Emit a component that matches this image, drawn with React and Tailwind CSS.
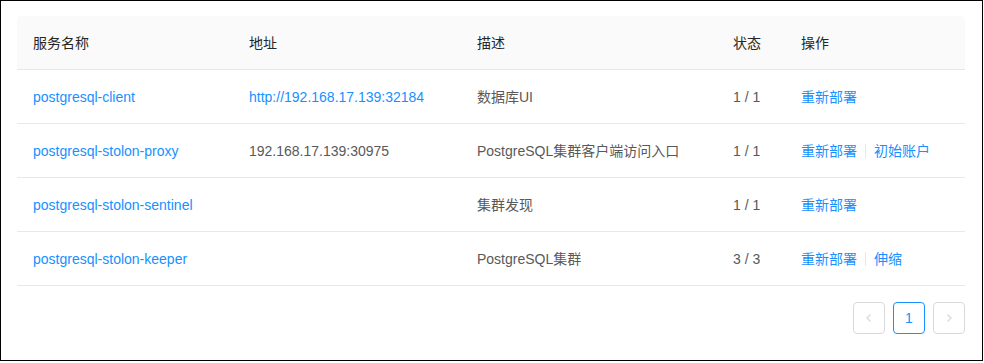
import React from "react";

const rows = [
  {
    name: "postgresql-client",
    addr: "http://192.168.17.139:32184",
    addrLink: true,
    desc: "数据库UI",
    status: "1 / 1",
    actions: ["重新部署"],
  },
  {
    name: "postgresql-stolon-proxy",
    addr: "192.168.17.139:30975",
    desc: "PostgreSQL集群客户端访问入口",
    status: "1 / 1",
    actions: ["重新部署", "初始账户"],
  },
  {
    name: "postgresql-stolon-sentinel",
    addr: "",
    desc: "集群发现",
    status: "1 / 1",
    actions: ["重新部署"],
  },
  {
    name: "postgresql-stolon-keeper",
    addr: "",
    desc: "PostgreSQL集群",
    status: "3 / 3",
    actions: ["重新部署", "伸缩"],
  },
];

const cols = "grid grid-cols-[216px_228px_256px_68px_1fr]";

const App = () => {
  return (
    <div
      className="w-[983px] h-[361px] border border-black bg-white pl-4 pr-[17px] pt-[15px] text-sm text-[#595959]"
      style={{ fontFamily: '"Liberation Sans", "Noto Sans CJK SC", sans-serif' }}
    >
      {/* table header */}
      <div className={`${cols} h-[54px] items-center bg-[#fafafa] rounded-t border-b border-[#e8e8e8] text-[#262626]`}>
        <div className="px-4">服务名称</div>
        <div className="px-4">地址</div>
        <div className="px-4">描述</div>
        <div className="px-4">状态</div>
        <div className="px-4">操作</div>
      </div>

      {rows.map((r) => (
        <div key={r.name} className={`${cols} h-[54px] items-center border-b border-[#e8e8e8]`}>
          <div className="px-4 text-[#1890ff]">{r.name}</div>
          <div className={`px-4 ${r.addrLink ? "text-[#1890ff]" : ""}`}>{r.addr}</div>
          <div className="px-4">{r.desc}</div>
          <div className="px-4">{r.status}</div>
          <div className="px-4 flex items-center text-[#1890ff]">
            {r.actions.map((a, i) => (
              <React.Fragment key={a}>
                {i > 0 && <span className="mx-2 w-px h-[14px] bg-[#e8e8e8]" />}
                <span>{a}</span>
              </React.Fragment>
            ))}
          </div>
        </div>
      ))}

      {/* pagination */}
      <div className="flex justify-end gap-2 mt-4">
        <button className="w-8 h-8 rounded border border-[#d9d9d9] flex items-center justify-center text-[#d9d9d9]">
          <svg width="10" height="10" viewBox="0 0 10 10" fill="none" stroke="currentColor" strokeWidth="1.3">
            <path d="M6.5 1.5 3 5l3.5 3.5" />
          </svg>
        </button>
        <button className="w-8 h-8 rounded border border-[#1890ff] flex items-center justify-center text-[#1890ff]">
          1
        </button>
        <button className="w-8 h-8 rounded border border-[#d9d9d9] flex items-center justify-center text-[#d9d9d9]">
          <svg width="10" height="10" viewBox="0 0 10 10" fill="none" stroke="currentColor" strokeWidth="1.3">
            <path d="M3.5 1.5 7 5 3.5 8.5" />
          </svg>
        </button>
      </div>
    </div>
  );
};

export default App;
